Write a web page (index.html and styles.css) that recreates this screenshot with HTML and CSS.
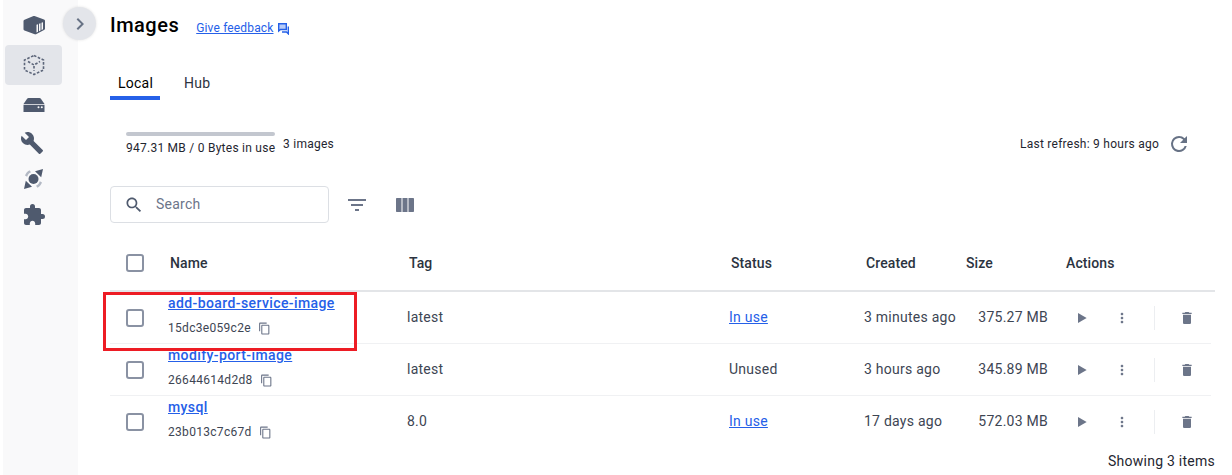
FILE: index.html
```html
<!DOCTYPE html>
<html lang="en">
<head>
    <meta charset="UTF-8">
    <title>Images</title>
    <link rel="stylesheet" href="styles.css">
</head>
<body>
    <svg class="icon-defs" width="0" height="0">
        <symbol id="i-copy" viewBox="0 0 24 24"><path d="M16 1H4c-1.100 0-2 .9-2 2v14h2V3h12V1zm3 4H8c-1.100 0-2 .9-2 2v14c0 1.100.9 2 2 2h11c1.100 0 2-.9 2-2V7c0-1.100-.9-2-2-2zm0 16H8V7h11v14z"/></symbol>
        <symbol id="i-play" viewBox="0 0 24 24"><path d="M6 4.500v15L19 12z"/></symbol>
        <symbol id="i-more" viewBox="0 0 24 24"><path d="M12 8c1.100 0 2-.9 2-2s-.9-2-2-2-2 .9-2 2 .9 2 2 2zm0 2c-1.100 0-2 .9-2 2s.9 2 2 2 2-.9 2-2-.9-2-2-2zm0 6c-1.100 0-2 .9-2 2s.9 2 2 2 2-.9 2-2-.9-2-2-2z"/></symbol>
        <symbol id="i-trash" viewBox="0 0 24 24"><path d="M6 19c0 1.100.9 2 2 2h8c1.100 0 2-.9 2-2V7H6v12zM19 4h-3.500l-1-1h-5l-1 1H5v2h14V4z"/></symbol>
    </svg>

    <div class="app">
        <nav class="sidebar">
            <a class="nav-item top">
                <svg class="nav-icon" viewBox="0 0 24 24"><path d="M12.500 3 22 6.500c.6.200 1 .7 1 1.300v8c0 .6-.4 1.100-1 1.300l-8 4.200c-.4.200-.9.200-1.300 0L2.500 17.500c-.6-.2-1-.7-1-1.300V8c0-.6.400-1.100 1-1.300l9-3.700c.3-.1.700-.1 1 0z"/><path fill="#f9f9fa" d="M14.500 11.800l1.500-.6v7.600l-1.500.7zM17 10.800l1.500-.6v7.300l-1.500.7zM19.500 9.800l1.500-.6v7l-1.500.7z"/></svg>
            </a>
            <a class="nav-item active">
                <svg class="nav-icon outline" viewBox="0 0 24 24"><path d="M12 2.500 21.500 7v10L12 21.500 2.500 17V7z"/><path d="M6 8.500l6 3.500 6-3.500M12 13v5"/></svg>
            </a>
            <a class="nav-item tall">
                <svg class="nav-icon" viewBox="0 0 24 24"><path d="M6.500 5h11c.5 0 .9.200 1.200.6l3.800 5.400h-21l3.800-5.400c.3-.4.7-.6 1.200-.6z"/><path fill-rule="evenodd" d="M1.500 11.800h21V19h-21zM16.500 13.300a1 1 0 1 0 0 2 1 1 0 0 0 0-2zm3.300 0a1 1 0 1 0 0 2 1 1 0 0 0 0-2z"/></svg>
            </a>
            <a class="nav-item wrench">
                <svg class="nav-icon" viewBox="0 0 24 24"><path d="M22.700 19l-9.100-9.100c.9-2.300.4-5-1.500-6.900-2-2-5-2.400-7.400-1.300L9 6 6 9 1.600 4.700C.4 7.100.9 10.100 2.900 12.100c1.900 1.900 4.600 2.400 6.900 1.500l9.100 9.100c.4.400 1 .4 1.400 0l2.300-2.300c.5-.4.5-1.100.1-1.400z"/></svg>
            </a>
            <a class="nav-item">
                <svg class="nav-icon" viewBox="0 0 24 24"><circle cx="11.500" cy="12" r="5"/><path d="M21 2l-1.800 8.200L13 4.200zM2 22l1.800-8.200L10 19.800z"/><path fill="#b3b9c4" d="M3 8.500c.8-2.200 2.300-4 4.500-5.200l1.500 2C7 6.300 5.800 7.700 5.200 9.800zM20 15.500c-.8 2.200-2.300 4-4.500 5.200l-1.500-2c2-1 3.200-2.400 3.800-4.500z"/></svg>
            </a>
            <a class="nav-item">
                <svg class="nav-icon" viewBox="0 0 24 24"><path d="M20.500 11H19V7c0-1.100-.9-2-2-2h-4V3.500a2.500 2.500 0 0 0-5 0V5H4c-1.100 0-2 .9-2 2v3.800h1.500c1.500 0 2.700 1.200 2.700 2.700S5 16.200 3.500 16.200H2V20c0 1.100.9 2 2 2h3.800v-1.500c0-1.500 1.200-2.700 2.700-2.700s2.700 1.200 2.700 2.700V22H17c1.100 0 2-.9 2-2v-4h1.500a2.500 2.500 0 0 0 0-5z"/></svg>
            </a>
        </nav>

        <button class="collapse-btn">
            <svg viewBox="0 0 24 24" width="24" height="24"><path d="M10 6 8.600 7.400 13.200 12l-4.600 4.600L10 18l6-6z"/></svg>
        </button>

        <main class="content">
            <header class="page-head">
                <h1>Images</h1>
                <a class="feedback">Give feedback</a>
                <svg class="feedback-icon" viewBox="0 0 13 13"><path fill="#b9ccf7" stroke="#2560e8" stroke-width="1.400" d="M1.700 1.700h7.600v5.800H3.500L1.700 9z"/><path fill="none" stroke="#2560e8" stroke-width="1.400" d="M11.300 4.500v7.300L9.500 10H5"/></svg>
            </header>

            <div class="tabs">
                <span class="tab selected">Local</span>
                <span class="tab">Hub</span>
            </div>

            <section class="usage-bar">
                <div class="usage">
                    <div class="meter"></div>
                    <span>947.31 MB / 0 Bytes in use</span>
                </div>
                <span class="count">3 images</span>
                <span class="refresh">Last refresh: 9 hours ago</span>
                <svg class="refresh-icon" viewBox="0 0 24 24"><path d="M17.650 6.350A7.960 7.960 0 0 0 12 4a8 8 0 1 0 7.730 10h-2.080A6 6 0 1 1 12 6c1.660 0 3.140.69 4.220 1.780L13 11h7V4z"/></svg>
            </section>

            <section class="toolbar">
                <div class="search">
                    <svg class="search-icon" viewBox="0 0 24 24"><path d="M15.500 14h-.79l-.28-.27C15.410 12.590 16 11.110 16 9.500 16 5.910 13.090 3 9.500 3S3 5.910 3 9.500 5.910 16 9.500 16c1.610 0 3.090-.59 4.230-1.570l.27.28v.79l5 4.990L20.490 19l-4.990-5zm-6 0C7.010 14 5 11.990 5 9.500S7.010 5 9.500 5 14 7.010 14 9.500 11.990 14 9.500 14z"/></svg>
                    <span class="search-text">Search</span>
                </div>
                <svg class="tool-icon filter" viewBox="0 0 24 24"><path d="M10 18h4v-2h-4zM3 6v2h18V6zm3 7h12v-2H6z"/></svg>
                <svg class="tool-icon" viewBox="0 0 24 24"><path d="M3 6c0-.6.400-1 1-1h4.500v14H4c-.6 0-1-.4-1-1zM9.500 5h5v14h-5zM15.500 5H20c.6 0 1 .4 1 1v12c0 .6-.4 1-1 1h-4.500z"/></svg>
            </section>

            <div class="table">
                <div class="row head">
                    <span class="check"></span>
                    <span class="head-name">Name</span>
                    <span class="head-name">Tag</span>
                    <span class="head-name">Status</span>
                    <span class="head-name">Created</span>
                    <span>Size</span>
                    <span>Actions</span>
                </div>

                <div class="row">
                    <span class="check"></span>
                    <div class="name">
                        <a class="image-link">add-board-service-image</a>
                        <div class="image-id">15dc3e059c2e <svg class="copy"><use href="#i-copy"/></svg></div>
                    </div>
                    <span>latest</span>
                    <span><a class="status-link">In use</a></span>
                    <span>3 minutes ago</span>
                    <span class="size">375.27 MB</span>
                    <div class="actions">
                        <svg class="act play"><use href="#i-play"/></svg>
                        <svg class="act more"><use href="#i-more"/></svg>
                        <span class="sep"></span>
                        <svg class="act trash"><use href="#i-trash"/></svg>
                    </div>
                </div>

                <div class="row">
                    <span class="check"></span>
                    <div class="name">
                        <a class="image-link">modify-port-image</a>
                        <div class="image-id">26644614d2d8 <svg class="copy"><use href="#i-copy"/></svg></div>
                    </div>
                    <span>latest</span>
                    <span>Unused</span>
                    <span>3 hours ago</span>
                    <span class="size">345.89 MB</span>
                    <div class="actions">
                        <svg class="act play"><use href="#i-play"/></svg>
                        <svg class="act more"><use href="#i-more"/></svg>
                        <span class="sep"></span>
                        <svg class="act trash"><use href="#i-trash"/></svg>
                    </div>
                </div>

                <div class="row last">
                    <span class="check"></span>
                    <div class="name">
                        <a class="image-link">mysql</a>
                        <div class="image-id">23b013c7c67d <svg class="copy"><use href="#i-copy"/></svg></div>
                    </div>
                    <span>8.0</span>
                    <span><a class="status-link">In use</a></span>
                    <span>17 days ago</span>
                    <span class="size">572.03 MB</span>
                    <div class="actions">
                        <svg class="act play"><use href="#i-play"/></svg>
                        <svg class="act more"><use href="#i-more"/></svg>
                        <span class="sep"></span>
                        <svg class="act trash"><use href="#i-trash"/></svg>
                    </div>
                </div>
            </div>

            <div class="showing">Showing 3 items</div>
        </main>

        <div class="highlight"></div>
    </div>
</body>
</html>
```

FILE: styles.css
```css
* {
    box-sizing: border-box;
}
html, body {
    margin: 0;
    height: 100%;
    overflow: hidden;
    background: #fff;
}
body {
    font-family: Roboto, "Liberation Sans", sans-serif;
    font-size: 14px;
    letter-spacing: 0.25px;
    color: #2b3340;
}
.icon-defs {
    position: absolute;
}
.app {
    position: relative;
    display: flex;
    height: 475px;
    padding-left: 3px;
}

/* sidebar */
.sidebar {
    width: 75px;
    flex: none;
    background: #f9f9fa;
    padding: 8px 2px;
    display: flex;
    flex-direction: column;
}
.nav-item {
    height: 36px;
    display: flex;
    align-items: center;
    justify-content: center;
    border-radius: 4px;
    margin-right: 14px;
}
.nav-item.top {
    height: 34px;
    margin-bottom: 3px;
}
.nav-item.active {
    height: 40px;
    background: #e3e5ea;
}
.nav-item.tall {
    height: 40px;
}
.nav-item.wrench {
    padding-right: 3px;
}
.nav-icon {
    width: 24px;
    height: 24px;
    fill: #4f5a6e;
}
.nav-icon.outline {
    fill: none;
    stroke: #5d667a;
    stroke-width: 1.6;
    stroke-dasharray: 2.6 1.6;
}
.collapse-btn {
    position: absolute;
    left: 63px;
    top: 7px;
    width: 33px;
    height: 33px;
    border: none;
    border-radius: 50%;
    padding: 0;
    background: #e3e5ea;
    box-shadow: 0 0 3px rgba(0,0,0,0.12);
    display: flex;
    align-items: center;
    justify-content: center;
    fill: #677285;
}

/* main column */
.content {
    flex: 1;
    padding: 0 17px 0 32px;
    min-width: 0;
}
.page-head {
    height: 50px;
    display: flex;
    align-items: center;
}
h1 {
    margin: 0;
    font-size: 20px;
    font-weight: 500;
    letter-spacing: 0.5px;
    color: #000;
}
.feedback {
    margin-left: 17px;
    margin-top: 5px;
    font-size: 12px;
    letter-spacing: 0.15px;
    color: #2560e8;
    text-decoration: underline;
}
.feedback-icon {
    width: 13px;
    height: 13px;
    margin: 7px 0 0 3px;
}
.tabs {
    display: flex;
    margin-top: 17px;
    height: 33px;
}
.tab {
    padding: 8px 8px 0;
    margin-right: 16px;
}
.tab.selected {
    width: 50px;
    color: #000;
    border-bottom: 4px solid #2560e8;
}
.usage-bar {
    display: flex;
    align-items: flex-start;
    margin-top: 32px;
    height: 26px;
    font-size: 12px;
    color: #1f2630;
}
.usage {
    margin-left: 16px;
    width: 157px;
    white-space: nowrap;
}
.meter {
    width: 149px;
    height: 4px;
    border-radius: 2px;
    background: #c3c7cf;
    margin-bottom: 5px;
}
.count {
    margin-top: 5px;
}
.refresh {
    margin-left: auto;
    margin-top: 5px;
}
.refresh-icon {
    width: 24px;
    height: 24px;
    margin: 0 24px 0 8px;
    fill: #677285;
}
.toolbar {
    display: flex;
    align-items: center;
    margin-top: 28px;
}
.search {
    width: 219px;
    height: 37px;
    border: 1px solid #dcdfe4;
    border-radius: 4px;
    display: flex;
    align-items: center;
    padding-left: 13px;
    color: #6c7589;
}
.search-icon {
    width: 20px;
    height: 20px;
    margin-right: 12px;
    fill: #4f5a6e;
}
.search-text {
    padding-bottom: 2px;
}
.tool-icon {
    width: 24px;
    height: 24px;
    fill: #6c7589;
    margin-left: 24px;
}
.tool-icon.filter {
    margin-left: 16px;
}

/* table */
.table {
    margin-top: 13px;
}
.row {
    display: grid;
    grid-template-columns: 58px 239px 322px 135px 102px 100px 1fr;
    align-items: center;
    height: 52px;
    padding-bottom: 2px;
    border-bottom: 1px solid #f0f1f3;
    margin-right: 4px;
    color: #3d4553;
    white-space: nowrap;
}
.row.head {
    height: 56px;
    padding-bottom: 0;
    border-bottom: 2px solid #e3e5e8;
    margin-right: 0;
    font-weight: 500;
    letter-spacing: 0.1px;
    color: #2b3340;
}
.head-name {
    padding-left: 2px;
}
.row.last {
    border-bottom: none;
}
.check {
    width: 18px;
    height: 18px;
    margin: 2px 0 0 16px;
    border: 2px solid #8a92a3;
    border-radius: 3px;
}
.row.head .check {
    margin-top: 0;
}
.name {
    align-self: start;
}
.image-link {
    display: block;
    font-weight: 500;
    letter-spacing: 0.4px;
    line-height: 20px;
    margin-top: 1px;
    color: #2560e8;
    text-decoration: underline;
}
.image-id {
    display: flex;
    align-items: center;
    gap: 7px;
    margin-top: 8px;
    font-size: 12px;
    letter-spacing: 0.3px;
}
.copy {
    width: 13px;
    height: 13px;
    fill: #6c7589;
}
.status-link {
    color: #2560e8;
    text-decoration: underline;
}
.size {
    justify-self: end;
    margin-right: 18px;
}
.actions {
    display: flex;
    align-items: center;
    height: 24px;
    margin-top: 2px;
}
.act {
    width: 16px;
    height: 16px;
    fill: #6c7589;
}
.act.play {
    margin-left: 8px;
}
.act.more {
    margin-left: 24px;
}
.sep {
    width: 1px;
    height: 24px;
    margin: 0 24px;
    background: #eceef1;
}
.showing {
    margin-top: 5px;
    text-align: right;
    color: #1f2630;
}

/* annotation drawn over the first row */
.highlight {
    position: absolute;
    left: 103px;
    top: 292px;
    width: 254px;
    height: 59px;
    border: 3px solid #ed1c24;
}
```
